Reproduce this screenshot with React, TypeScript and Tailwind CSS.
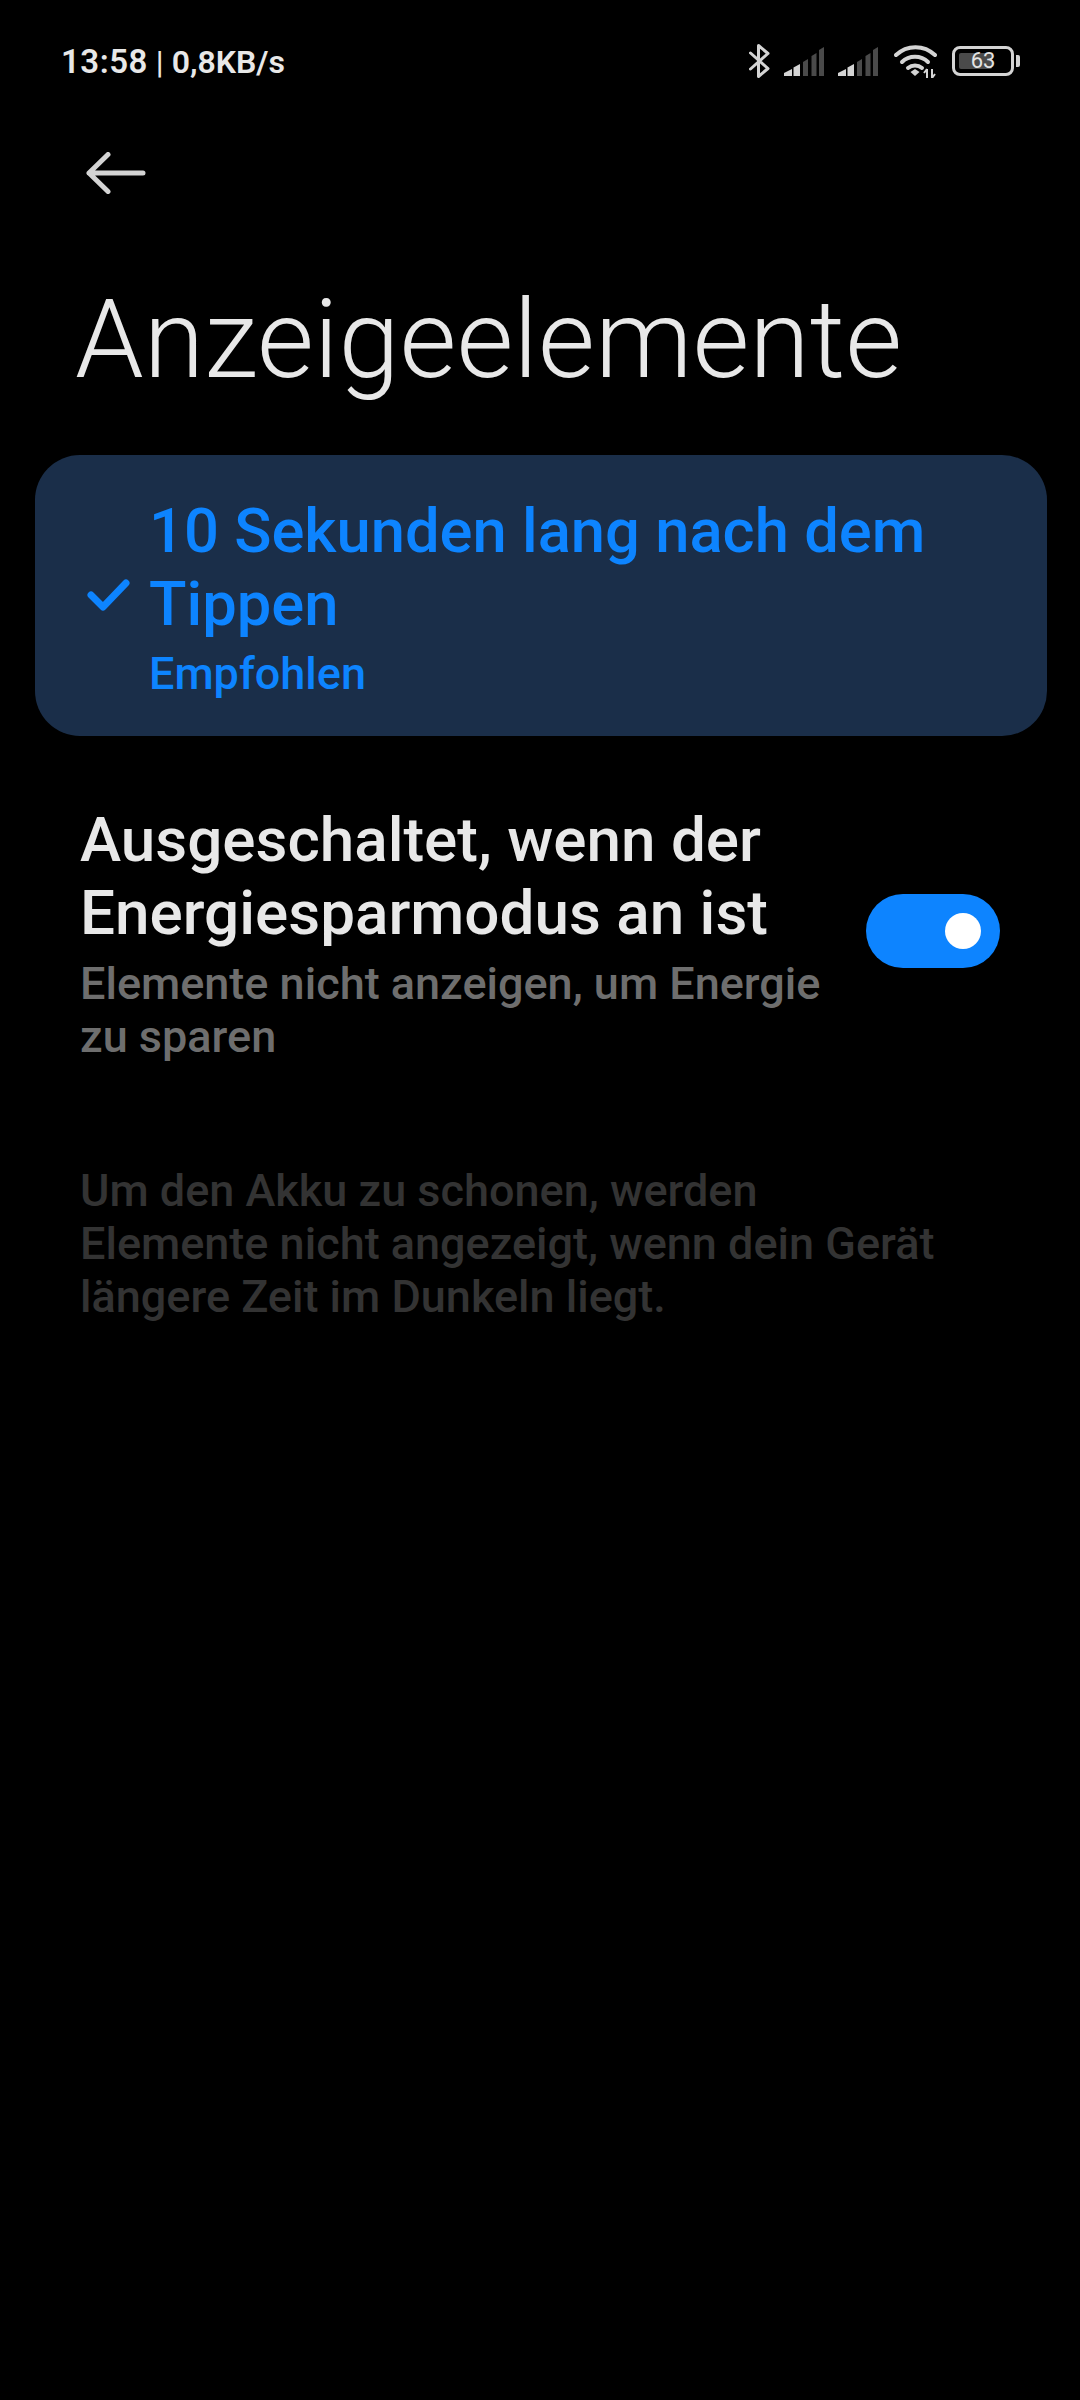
const font = "font-['Roboto',sans-serif]";

function Bluetooth() {
  return (
    <svg width="21" height="34" viewBox="0 0 21 34" fill="none" stroke="#d4d4d4" strokeWidth="3">
      <path d="M1.500 9 19 24.500 9.500 32.500V1.500L19 9.500 1.500 25" strokeLinejoin="round" strokeLinecap="round" />
    </svg>
  );
}

function Signal() {
  return (
    <svg width="40" height="29" viewBox="0 0 40 29">
      <path d="M0 29v-3l8-4v7z" fill="#d4d4d4" />
      <path d="M9.500 29V20.500L16 17v12z" fill="#d4d4d4" />
      <path d="M19 29V15l5-3v17z" fill="#4a4a4a" />
      <path d="M27.500 29V9l5-3v23z" fill="#4a4a4a" />
      <path d="M35 29V3l5-3v29z" fill="#4a4a4a" />
    </svg>
  );
}

function Wifi() {
  return (
    <svg width="43" height="33" viewBox="0 0 43 33" fill="none">
      <path d="M2 10C13 -0.500 30 -0.500 41 10" stroke="#d4d4d4" strokeWidth="4" strokeLinecap="round" />
      <path d="M8 17C15 10 27 10 34 17" stroke="#d4d4d4" strokeWidth="4" strokeLinecap="round" />
      <path d="M14 23C18 19.500 24 19.500 28 23" stroke="#d4d4d4" strokeWidth="4" strokeLinecap="round" />
      <path d="M16.500 27 21 24 25.500 27 21 31z" fill="#d4d4d4" />
      <path d="M33 24v9M30 28l3-4" stroke="#d4d4d4" strokeWidth="2" />
      <path d="M38 24v9M41 29l-3 4" stroke="#d4d4d4" strokeWidth="2" />
    </svg>
  );
}

function Battery() {
  return (
    <div className="flex items-center gap-[2px]">
      <div className="relative flex h-[30px] w-[62px] items-center justify-center overflow-hidden rounded-[8px] border-[3px] border-[#d4d4d4]">
        <div className="absolute left-[4px] top-[4px] bottom-[4px] w-[33px] rounded-[2px] bg-[#4a4a4a]" />
        <span className="relative text-[22px] leading-none text-[#e4e4e4]">63</span>
      </div>
      <div className="h-[12px] w-[4px] rounded-r-[2px] bg-[#d4d4d4]" />
    </div>
  );
}

export default function App() {
  return (
    <div className={`${font} h-[2400px] w-[1080px] bg-black`}>
      {/* status bar */}
      <div className="flex h-[122px] items-center justify-between pl-[61px] pr-[60px]">
        <div className="text-[32px] font-semibold leading-none text-[#e8e8e8]">
          <span className="text-[33px] tracking-[0.5px]">13:58</span> <span className="font-normal">|</span> 0,8KB/s
        </div>
        <div className="flex items-center">
          <Bluetooth />
          <div className="ml-[14px]"><Signal /></div>
          <div className="ml-[14px]"><Signal /></div>
          <div className="ml-[16px]"><Wifi /></div>
          <div className="ml-[15px]"><Battery /></div>
        </div>
      </div>

      {/* back */}
      <div className="pl-[86px] pt-[30px]">
        <svg width="60" height="42" viewBox="0 0 60 42" fill="none" stroke="#d4d4d4" strokeWidth="5" strokeLinecap="round" strokeLinejoin="round">
          <path d="M57 21H3M22 2.500 3 21l19 18.500" />
        </svg>
      </div>

      <h1 className="mt-[81px] pl-[75px] text-[110px] font-light leading-[130px] text-[#e8e8e8]">Anzeigeelemente</h1>

      {/* selected option */}
      <div className="mx-[35px] mt-[50px] flex h-[281px] w-[1012px] items-center rounded-[45px] bg-[#1a2e49] pl-[52px]">
        <svg className="shrink-0" width="44" height="36" viewBox="0 0 44 36" fill="none" stroke="#0d84ff" strokeWidth="7" strokeLinecap="round" strokeLinejoin="round">
          <path d="M4 17 16 29 39 5" />
        </svg>
        <div className="ml-[18px] w-[830px] pt-[4px] text-[#0d84ff]">
          <div className="text-[61.500px] font-medium leading-[73px]">10 Sekunden lang nach dem Tippen</div>
          <div className="mt-[6px] text-[45px] font-medium leading-[53px]">Empfohlen</div>
        </div>
      </div>

      {/* switch row */}
      <div className="mt-[67px] flex items-center justify-between pl-[80px] pr-[80px]">
        <div className="w-[760px]">
          <div className="text-[62px] font-medium leading-[73px] text-[#e8e8e8]">Ausgeschaltet, wenn der Energiesparmodus an ist</div>
          <div className="mt-[8px] text-[45px] font-medium leading-[53px] text-[#6e6e6e]">Elemente nicht anzeigen, um Energie zu sparen</div>
        </div>
        <div className="mb-[4px] flex h-[74px] w-[134px] items-center justify-end rounded-full bg-[#0d84ff] pr-[19px]">
          <div className="h-[36px] w-[36px] rounded-full bg-white" />
        </div>
      </div>

      <p className="mt-[101px] w-[942px] pl-[80px] text-[45px] font-medium leading-[53px] text-[#333333]">
        Um den Akku zu schonen, werden Elemente nicht angezeigt, wenn dein Gerät längere Zeit im Dunkeln liegt.
      </p>
    </div>
  );
}
